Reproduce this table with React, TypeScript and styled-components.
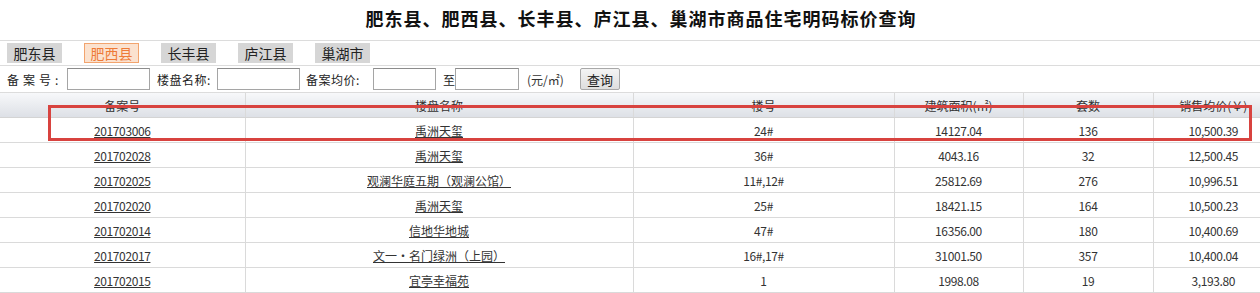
import React, { FC } from "react";
import styled, { createGlobalStyle } from "styled-components";

const GlobalStyle = createGlobalStyle`
  html, body {
    margin: 0;
    padding: 0;
    background: #fff;
    overflow: hidden;
  }
  body {
    font-family: "Noto Sans CJK SC", "DejaVu Sans", sans-serif;
    font-size: 12px;
    color: #333;
  }
`;

const Page = styled.div`
  position: relative;
  width: 1260px;
  height: 293px;
  overflow: hidden;
`;

const Title = styled.h1`
  margin: 0;
  height: 40px;
  padding-left: 22px;
  line-height: 36px;
  text-align: center;
  font-size: 18px;
  font-weight: 700;
  color: #111;
  letter-spacing: 1px;
  border-bottom: 1px solid #dcdcdc;
`;

const Tabs = styled.div`
  display: flex;
  align-items: center;
  gap: 22px;
  height: 24px;
  padding-left: 7px;
  border-bottom: 1px solid #dcdcdc;
`;

const Tab = styled.span<{ $active?: boolean }>`
  box-sizing: border-box;
  width: 55px;
  height: 20px;
  line-height: 19px;
  text-align: center;
  font-size: 14px;
  background: ${(p) => (p.$active ? "#fbe2cf" : "#d6d6d6")};
  color: ${(p) => (p.$active ? "#ee7b37" : "#222")};
  border: 1px solid ${(p) => (p.$active ? "#f2a46e" : "#d6d6d6")};
`;

const SearchBar = styled.div`
  display: flex;
  align-items: center;
  height: 26px;
  padding-left: 7px;
  border-bottom: 1px solid #dcdcdc;
`;

const Label = styled.span<{ $gap?: number; $w: number; $spaced?: boolean }>`
  flex: none;
  margin-left: ${(p) => p.$gap ?? 0}px;
  width: ${(p) => p.$w}px;
  font-size: 12px;
  color: #222;
  letter-spacing: ${(p) => (p.$spaced ? "4px" : "0.5px")};
  white-space: nowrap;
`;

const Input = styled.input<{ $w: number }>`
  flex: none;
  box-sizing: border-box;
  width: ${(p) => p.$w}px;
  height: 22px;
  margin: 0;
  padding: 0 2px;
  border: 1px solid #a5a5a5;
  border-top-color: #8c8c8c;
  background: #fff;
`;

const Unit = styled.span`
  flex: none;
  width: 45px;
  margin-left: 8px;
  font-size: 12px;
  color: #333;
`;

const Button = styled.button`
  box-sizing: border-box;
  margin-left: 8px;
  width: 40px;
  height: 22px;
  padding: 0;
  font-family: inherit;
  font-size: 13px;
  color: #222;
  background: linear-gradient(#f4f4f4, #dedede);
  border: 1px solid #a8a8a8;
  border-radius: 2px;
`;

const Table = styled.table`
  width: 1273px;
  border-collapse: collapse;
  table-layout: fixed;
  font-size: 12px;
`;

const Th = styled.th`
  height: 24px;
  padding: 0;
  font-weight: 400;
  color: #333;
  text-align: center;
  background: linear-gradient(#f7f8fa, #dde0e6);
  border-left: 1px solid #dadada;
  border-bottom: 1px solid #d4d4d4;
  white-space: nowrap;
  &:first-child {
    border-left: none;
  }
`;

const Td = styled.td<{ $num?: boolean }>`
  height: 24px;
  padding: 0;
  text-align: center;
  color: #333;
  letter-spacing: ${(p) => (p.$num ? "-0.4px" : "0")};
  border-left: 1px solid #dadada;
  border-bottom: 1px solid #dadada;
  white-space: nowrap;
  &:first-child {
    border-left: none;
  }
`;

const Link = styled.a`
  color: #333;
  text-decoration: underline;
  text-underline-offset: 1px;
`;

const Highlight = styled.div`
  position: absolute;
  left: 48px;
  top: 105px;
  width: 1204px;
  height: 36px;
  box-sizing: border-box;
  border: 3px solid #d8433f;
  pointer-events: none;
`;

const districts = ["肥东县", "肥西县", "长丰县", "庐江县", "巢湖市"];

const columns = [
  { title: "备案号", w: 245 },
  { title: "楼盘名称", w: 388 },
  { title: "楼号", w: 261 },
  { title: "建筑面积(㎡)", w: 129 },
  { title: "套数", w: 130 },
  { title: "销售均价(￥)", w: 120 },
];

const rows = [
  ["201703006", "禹洲天玺", "24#", "14127.04", "136", "10,500.39"],
  ["201702028", "禹洲天玺", "36#", "4043.16", "32", "12,500.45"],
  ["201702025", "观澜华庭五期（观澜公馆）", "11#,12#", "25812.69", "276", "10,996.51"],
  ["201702020", "禹洲天玺", "25#", "18421.15", "164", "10,500.23"],
  ["201702014", "信地华地城", "47#", "16356.00", "180", "10,400.69"],
  ["201702017", "文一·名门绿洲（上园）", "16#,17#", "31001.50", "357", "10,400.04"],
  ["201702015", "宜亭幸福苑", "1", "1998.08", "19", "3,193.80"],
];

const App: FC = () => {
  return (
    <Page>
      <GlobalStyle />
      <Title>肥东县、肥西县、长丰县、庐江县、巢湖市商品住宅明码标价查询</Title>
      <Tabs>
        {districts.map((d) => (
          <Tab key={d} $active={d === "肥西县"}>
            {d}
          </Tab>
        ))}
      </Tabs>
      <SearchBar>
        <Label $w={60} $spaced>
          备案号:
        </Label>
        <Input $w={83} />
        <Label $gap={7} $w={60}>
          楼盘名称:
        </Label>
        <Input $w={83} />
        <Label $gap={6} $w={67}>
          备案均价:
        </Label>
        <Input $w={63} />
        <Label $gap={7} $w={12}>
          至
        </Label>
        <Input $w={64} />
        <Unit>(元/㎡)</Unit>
        <Button>查询</Button>
      </SearchBar>
      <Table>
        <colgroup>
          {columns.map((c) => (
            <col key={c.title} style={{ width: c.w }} />
          ))}
        </colgroup>
        <thead>
          <tr>
            {columns.map((c) => (
              <Th key={c.title}>{c.title}</Th>
            ))}
          </tr>
        </thead>
        <tbody>
          {rows.map((r) => (
            <tr key={r[0]}>
              <Td $num>
                <Link href="#">{r[0]}</Link>
              </Td>
              <Td>
                <Link href="#">{r[1]}</Link>
              </Td>
              <Td $num>{r[2]}</Td>
              <Td $num>{r[3]}</Td>
              <Td $num>{r[4]}</Td>
              <Td $num>{r[5]}</Td>
            </tr>
          ))}
        </tbody>
      </Table>
      <Highlight />
    </Page>
  );
};

export default App;
